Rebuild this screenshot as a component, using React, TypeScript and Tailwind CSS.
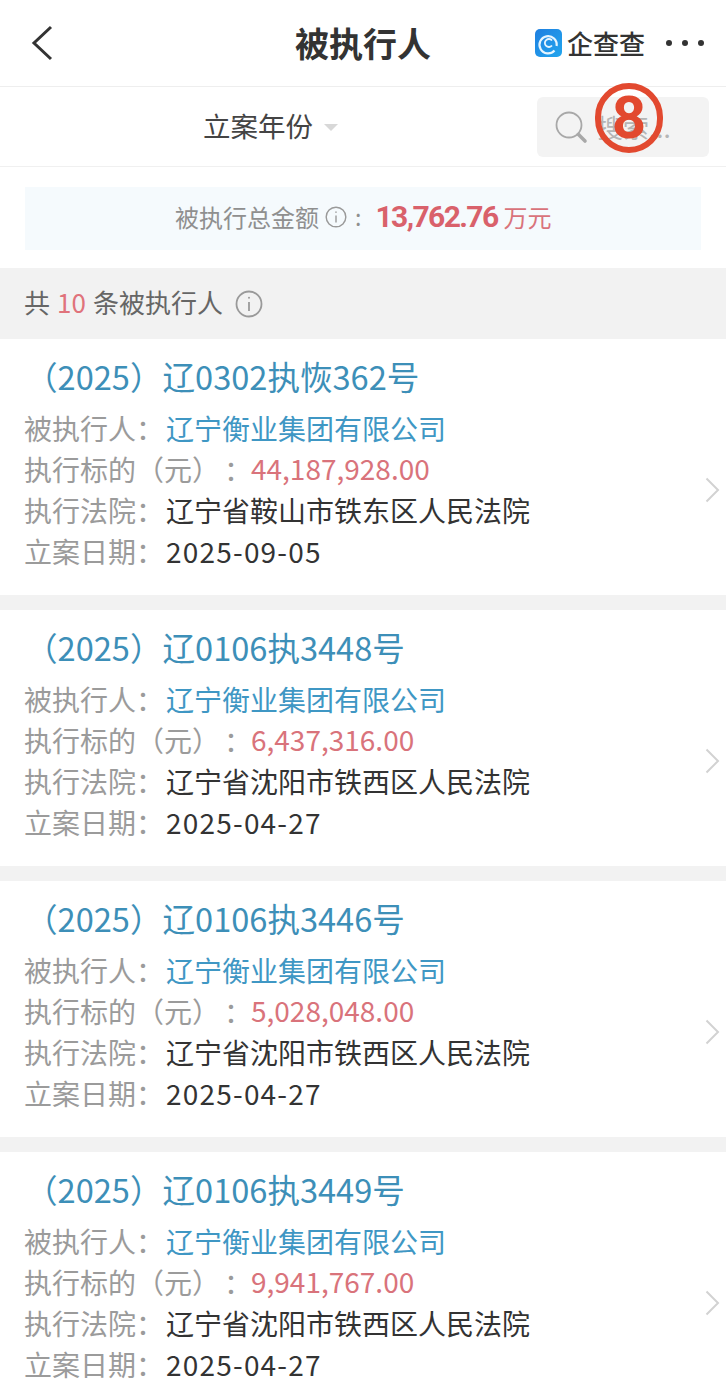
const cases = [
  { no: '（2025）辽0302执恢362号', amount: '44,187,928.00', court: '辽宁省鞍山市铁东区人民法院', date: '2025-09-05' },
  { no: '（2025）辽0106执3448号', amount: '6,437,316.00', court: '辽宁省沈阳市铁西区人民法院', date: '2025-04-27' },
  { no: '（2025）辽0106执3446号', amount: '5,028,048.00', court: '辽宁省沈阳市铁西区人民法院', date: '2025-04-27' },
  { no: '（2025）辽0106执3449号', amount: '9,941,767.00', court: '辽宁省沈阳市铁西区人民法院', date: '2025-04-27' },
];

function InfoIcon({ size }: { size: number }) {
  return (
    <svg width={size} height={size} viewBox="0 0 28 28" fill="none" stroke="#9a9a9a" strokeWidth="1.8">
      <circle cx="14" cy="14" r="12.5" />
      <path d="M14 12v9" />
      <circle cx="14" cy="7.8" r="1" fill="#9a9a9a" stroke="none" />
    </svg>
  );
}

function Row({ label, children }: { label: string; children: React.ReactNode }) {
  return (
    <div className="flex h-[41px] items-center text-[28px] leading-none">
      <span className="w-[142px] shrink-0 text-[#9b9b9b]">{label}</span>
      {children}
    </div>
  );
}

function CaseCard({ item }: { item: (typeof cases)[number] }) {
  return (
    <div className="relative h-[256px] bg-white pl-[24px] pt-[15px]">
      <div className="ml-[1px] h-[44px] whitespace-nowrap text-[32.6px] leading-[44px] text-[#3d8fb8]">
        {item.no}
      </div>
      <div className="mt-[9px]">
        <Row label="被执行人：">
          <span className="text-[#3f97c4]">辽宁衡业集团有限公司</span>
        </Row>
        <div className="flex h-[41px] items-center text-[28px] leading-none">
          <span className="w-[227px] shrink-0 whitespace-nowrap text-[#9b9b9b]">
            执行标的（元）<span className="ml-[18px]">：</span>
          </span>
          <span className="-mt-[2px] text-[28px] text-[#d9737b]">{item.amount}</span>
        </div>
        <Row label="执行法院：">
          <span className="text-[#333333]">{item.court}</span>
        </Row>
        <Row label="立案日期：">
          <span className="text-[28px] tracking-[1.2px] text-[#333333]">{item.date}</span>
        </Row>
      </div>
      <svg
        className="absolute left-[704px] top-[138px]"
        width="16"
        height="26"
        viewBox="0 0 16 26"
        fill="none"
        stroke="#d2d2d2"
        strokeWidth="2"
      >
        <path d="M2.5 1.5 14 13 2.5 24.5" />
      </svg>
    </div>
  );
}

export default function App() {
  return (
    <div
      className="relative h-[1398px] w-[726px] overflow-hidden bg-[#f2f2f2]"
      style={{ fontFamily: '"Noto Sans CJK SC", "Noto Sans", sans-serif' }}
    >
      {/* Header */}
      <header className="flex h-[87px] items-center border-b border-[#eeeeee] bg-white pl-[31px]">
        <svg width="22" height="36" viewBox="0 0 22 36" fill="none" stroke="#333333" strokeWidth="3">
          <path d="M20 2 3 18l17 16" />
        </svg>
        <h1 className="ml-[242px] text-[34px] font-bold leading-none text-[#333333]">被执行人</h1>
        <div className="ml-[104px] flex items-center">
          <svg width="27" height="28" viewBox="0 0 27 28">
            <defs>
              <linearGradient id="qcc" x1="0" y1="0" x2="1" y2="1">
                <stop offset="0" stopColor="#1f7fe0" />
                <stop offset="1" stopColor="#22a6ee" />
              </linearGradient>
            </defs>
            <rect width="27" height="28" rx="5" fill="url(#qcc)" />
            <path d="M19.5 21.5 A8.6 8.6 0 1 1 21.6 17" fill="none" stroke="#e6f5ff" strokeWidth="2.2" />
            <path d="M17 11.5a4 4 0 1 0 0 5" fill="none" stroke="#e6f5ff" strokeWidth="1.8" />
          </svg>
          <span className="ml-[5px] text-[26px] font-medium leading-none text-[#333333]">企查查</span>
        </div>
        <div className="ml-[21px] flex gap-[10px]">
          <span className="h-[6px] w-[6px] rounded-full bg-[#333333]" />
          <span className="h-[6px] w-[6px] rounded-full bg-[#333333]" />
          <span className="h-[6px] w-[6px] rounded-full bg-[#333333]" />
        </div>
      </header>

      {/* Filter */}
      <div className="flex h-[80px] items-center border-b border-[#f0f0f0] bg-white pl-[203px]">
        <span className="-mt-[2px] text-[27.5px] leading-none text-[#444444]">立案年份</span>
        <span className="ml-[11px] mt-[2px] h-0 w-0 border-x-[7px] border-t-[7px] border-x-transparent border-t-[#d8d8d8]" />
        <div className="ml-auto mr-[17px] flex h-[60px] w-[172px] items-center rounded-[6px] bg-[#f3f3f3] pl-[17px]">
          <svg width="34" height="34" viewBox="0 0 34 34" fill="none" stroke="#a8a8a8">
            <circle cx="15" cy="15" r="12.5" strokeWidth="1.8" />
            <path d="m24.5 24.5 6.5 6.5" strokeWidth="3.6" strokeLinecap="round" />
          </svg>
          <span className="ml-[9px] whitespace-nowrap text-[26px] leading-none text-[#b5b5b5]">搜索...</span>
        </div>
      </div>

      {/* Total */}
      <div className="h-[101px] bg-white px-[25px] pt-[20px]">
        <div className="flex h-[63px] items-center bg-[#f5fafd] pb-[4px] pl-[150px]">
          <span className="text-[24px] leading-none text-[#8f8f8f]">被执行总金额</span>
          <span className="ml-[6px]"><InfoIcon size={22} /></span>
          <span className="ml-[8px] text-[23px] leading-none text-[#8f8f8f]">:</span>
          <span
            className="ml-[14px] text-[30px] font-bold leading-none tracking-[-1.6px] text-[#d9616b]"
            style={{ fontFamily: 'Roboto, sans-serif' }}
          >
            13,762.76
          </span>
          <span className="ml-[6px] text-[24px] leading-none text-[#d9737b]">万元</span>
        </div>
      </div>

      {/* Count */}
      <div className="flex h-[71px] items-center pb-[3px] pl-[24px] text-[26px] leading-none text-[#666666]">
        <span>共</span>
        <span className="ml-[7px] text-[#e0737b]">10</span>
        <span className="ml-[7px]">条被执行人</span>
        <span className="ml-[12px] mt-[3px]"><InfoIcon size={28} /></span>
      </div>

      {/* Case list */}
      <div className="flex flex-col gap-[15px]">
        {cases.map((item) => (
          <CaseCard key={item.no} item={item} />
        ))}
      </div>

      {/* Red numbered badge over the search box */}
      <div
        className="absolute left-[595px] top-[83px] flex h-[70px] w-[68px] items-center justify-center rounded-full border-[6px] border-[#e2492f] text-[60px] font-bold leading-none text-[#e2492f]"
        style={{ fontFamily: 'Roboto, sans-serif' }}
      >
        8
      </div>
    </div>
  );
}
